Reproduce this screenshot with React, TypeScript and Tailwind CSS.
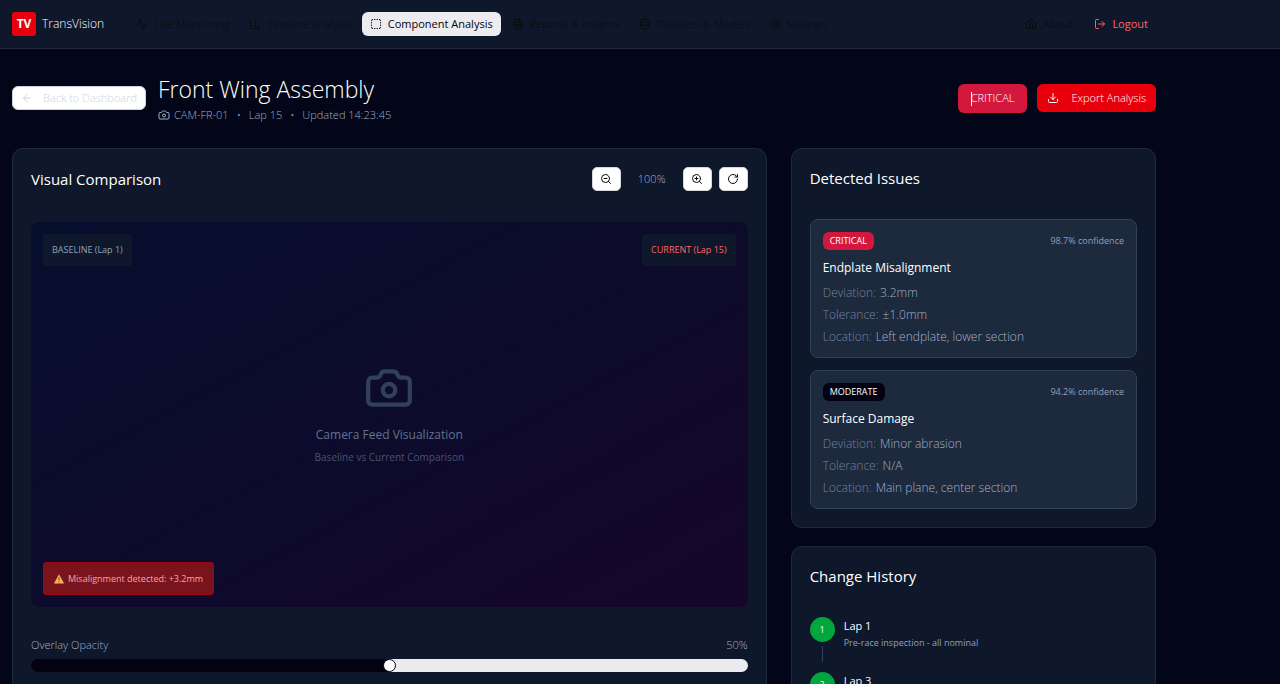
import { useState } from 'react';
import {
  Activity,
  ArrowLeft,
  Camera,
  ChartColumn,
  Database,
  Download,
  FileText,
  House,
  LogOut,
  RotateCw,
  Settings,
  SquareDashed,
  ZoomIn,
  ZoomOut,
} from 'lucide-react';

const navItems = [
  { label: 'Live Monitoring', icon: Activity },
  { label: 'Timeline Analysis', icon: ChartColumn },
  { label: 'Component Analysis', icon: SquareDashed, active: true },
  { label: 'Reports & Insights', icon: FileText },
  { label: 'Datasets & Models', icon: Database },
  { label: 'Settings', icon: Settings },
];

const issues = [
  {
    severity: 'CRITICAL',
    confidence: '98.7%',
    title: 'Endplate Misalignment',
    deviation: '3.2mm',
    tolerance: '±1.0mm',
    location: 'Left endplate, lower section',
  },
  {
    severity: 'MODERATE',
    confidence: '94.2%',
    title: 'Surface Damage',
    deviation: 'Minor abrasion',
    tolerance: 'N/A',
    location: 'Main plane, center section',
  },
];

const history = [
  { lap: 'Lap 1', note: 'Pre-race inspection - all nominal' },
  { lap: 'Lap 3' },
];

function Navbar() {
  return (
    <header className="border-b border-[#1d293d] bg-[#0f172b]">
      <div className="flex h-12 max-w-[1168px] items-center justify-between px-3">
        <div className="flex items-center gap-6">
          <div className="flex items-center gap-1.5">
            <div className="flex size-6 items-center justify-center rounded-[3px] bg-[#e7000b] text-[12px] font-bold text-white">
              TV
            </div>
            <span className="text-[12px] text-white">TransVision</span>
          </div>
          <nav className="flex items-center gap-[3px]">
            {navItems.map(({ label, icon: Icon, active }) => (
              <a
                key={label}
                href="#"
                aria-current={active ? 'page' : undefined}
                className={
                  active
                    ? 'flex h-6 items-center gap-1.5 rounded-md bg-[#ececf0] px-2 text-[11px] font-normal text-[#030213]'
                    : 'flex h-6 items-center gap-1.5 rounded-md px-2 text-[11px] text-[#0a0a0a]'
                }
              >
                <Icon className="size-3" />
                {label}
              </a>
            ))}
          </nav>
        </div>
        <div className="flex items-center gap-1.5">
          <a href="#" className="flex h-6 items-center gap-1.5 rounded-md px-2 text-[11px] text-[#0a0a0a]">
            <House className="size-3" />
            About
          </a>
          <button className="flex h-6 items-center gap-1.5 rounded-md px-2 text-[11px] font-normal text-[#ff6467]">
            <LogOut className="size-3" />
            Logout
          </button>
        </div>
      </div>
    </header>
  );
}

function PageHeader() {
  return (
    <div className="flex items-center justify-between">
      <div className="flex items-center gap-3">
        <button className="flex h-6 items-center gap-2.5 rounded-md border border-[#cad5e2] bg-white px-2 text-[11px] text-[#cad5e2]">
          <ArrowLeft className="size-3" />
          Back to Dashboard
        </button>
        <div>
          <h1 className="text-[23px] leading-8 text-white">Front Wing Assembly</h1>
          <div className="mt-0.5 flex items-center gap-2 text-[11px] leading-4 text-[#9fb0c8]">
            <span className="flex items-center gap-1">
              <Camera className="size-3" />
              CAM-FR-01
            </span>
            <span>•</span>
            <span>Lap 15</span>
            <span>•</span>
            <span>Updated 14:23:45</span>
          </div>
        </div>
      </div>
      <div className="flex items-center gap-2.5">
        <span className="relative flex h-[29px] items-center rounded-md bg-[#d4183d] px-[13px] text-[11px] text-white">
          CRITICAL
          <span className="absolute top-2 left-[13px] h-3.5 w-px bg-white" />
        </span>
        <button className="flex h-7 items-center gap-3 rounded-md bg-[#e7000b] px-2.5 text-[11px] text-white">
          <Download className="size-3" />
          Export Analysis
        </button>
      </div>
    </div>
  );
}

function VisualComparison() {
  const [opacity, setOpacity] = useState(50);
  const toolButton =
    'flex h-6 w-[29px] items-center justify-center rounded-[5px] border border-[#d5d7dc] bg-white text-[#0a0a0a]';

  return (
    <section className="col-span-2 rounded-[11px] border border-[#1d293d] bg-[#0f172b] p-[18px]">
      <div className="flex h-6 items-center justify-between">
        <h2 className="text-[15px] font-normal text-white">Visual Comparison</h2>
        <div className="flex items-center gap-[7px]">
          <button className={toolButton} aria-label="Zoom out">
            <ZoomOut className="size-3" />
          </button>
          <span className="w-12 text-center text-[11px] text-[#9fb0c8]">100%</span>
          <button className={toolButton} aria-label="Zoom in">
            <ZoomIn className="size-3" />
          </button>
          <button className={toolButton} aria-label="Reset view">
            <RotateCw className="size-3" />
          </button>
        </div>
      </div>

      {/* Camera feed */}
      <div className="relative mt-[31px] flex h-[385px] flex-col items-center justify-center rounded-lg bg-linear-to-br from-[#060e2e] via-[#0d0b2c] to-[#15062b]">
        <Camera className="size-[50px] text-[#314158]" />
        <p className="mt-2.5 text-[12px] leading-6 font-normal text-[#62748e]">Camera Feed Visualization</p>
        <p className="text-[10px] leading-5 font-normal text-[#45556c]">Baseline vs Current Comparison</p>

        <div className="absolute top-3 left-3 flex h-8 items-center rounded-[3px] bg-[#0f172b] px-[9px] text-[9px] font-normal text-[#90a1b9]">
          BASELINE (Lap 1)
        </div>
        <div className="absolute top-3 right-3 flex h-8 items-center rounded-[3px] bg-[#0f172b] px-[9px] text-[9px] font-normal text-[#ff6467]">
          CURRENT (Lap 15)
        </div>
        <div className="absolute bottom-3 left-3 flex h-[33px] items-center gap-1 rounded-[3px] border border-[#9f0712] bg-[#7a141c] px-2.5 text-[9px] font-normal text-[#ffa2a2]">
          <svg viewBox="0 0 20 20" className="size-2.5" aria-hidden="true">
            <path d="M10 1.5 19.3 18.5H.7Z" fill="#f8b55a" stroke="#f8b55a" strokeLinejoin="round" />
            <path d="M10 7v5.5M10 14.6v2" stroke="#5b2a17" strokeWidth="2" />
          </svg>
          Misalignment detected: +3.2mm
        </div>
      </div>

      {/* Overlay opacity */}
      <div className="mt-7 flex items-center justify-between text-[11px] leading-5 text-[#9fb0c8]">
        <label htmlFor="opacity">Overlay Opacity</label>
        <span>{opacity}%</span>
      </div>
      <input
        id="opacity"
        type="range"
        min={0}
        max={100}
        value={opacity}
        onChange={(e) => setOpacity(Number(e.target.value))}
        className="mt-1 block h-[13px] w-full appearance-none rounded-full [&::-webkit-slider-thumb]:size-[13px] [&::-webkit-slider-thumb]:appearance-none [&::-webkit-slider-thumb]:rounded-full [&::-webkit-slider-thumb]:border [&::-webkit-slider-thumb]:border-[#030213] [&::-webkit-slider-thumb]:bg-white"
        style={{ background: `linear-gradient(to right, #030213 ${opacity}%, #ececf0 ${opacity}%)` }}
      />
      <div className="h-24" />
    </section>
  );
}

function DetectedIssues() {
  return (
    <section className="rounded-[11px] border border-[#1d293d] bg-[#0f172b] p-[18px]">
      <h2 className="text-[15px] leading-[22px] font-normal text-white">Detected Issues</h2>
      <div className="mt-[30px] space-y-3">
        {issues.map((issue) => (
          <div key={issue.title} className="rounded-lg border border-[#314158] bg-[#1d293d] px-3 pt-3 pb-[9px]">
            <div className="flex h-[18px] items-center justify-between">
              <span
                className={
                  issue.severity === 'CRITICAL'
                    ? 'rounded-md bg-[#d4183d] px-[7px] text-[9px] leading-[18px] font-normal text-white'
                    : 'rounded-md bg-[#030213] px-[7px] text-[9px] leading-[18px] font-normal text-white'
                }
              >
                {issue.severity}
              </span>
              <span className="text-[9px] font-normal text-[#90a1b9]">{issue.confidence} confidence</span>
            </div>
            <h3 className="mt-2 text-[12px] leading-5 font-normal text-white">{issue.title}</h3>
            <dl className="mt-1 text-[12px] leading-[22px] text-[#a3b3ca]">
              <div className="flex gap-1">
                <dt className="text-[#71839d]">Deviation:</dt>
                <dd>{issue.deviation}</dd>
              </div>
              <div className="flex gap-1">
                <dt className="text-[#71839d]">Tolerance:</dt>
                <dd>{issue.tolerance}</dd>
              </div>
              <div className="flex gap-1">
                <dt className="text-[#71839d]">Location:</dt>
                <dd>{issue.location}</dd>
              </div>
            </dl>
          </div>
        ))}
      </div>
    </section>
  );
}

function ChangeHistory() {
  return (
    <section className="rounded-[11px] border border-[#1d293d] bg-[#0f172b] p-[18px]">
      <h2 className="text-[15px] leading-[22px] font-normal text-white">Change History</h2>
      <ol className="mt-[30px]">
        {history.map((entry, i) => (
          <li key={entry.lap} className="flex h-[55px] gap-[9px]">
            <div className="flex flex-col items-center">
              <div className="flex size-[25px] items-center justify-center rounded-full bg-[#00a63e] text-[9px] font-normal text-white">
                {i + 1}
              </div>
              <div className="mt-1 h-4 w-px bg-[#314158]" />
            </div>
            <div className="font-normal">
              <p className="text-[11px] leading-[18px] text-white">{entry.lap}</p>
              {entry.note && <p className="text-[9px] leading-4 text-[#90a1b9]">{entry.note}</p>}
            </div>
          </li>
        ))}
      </ol>
    </section>
  );
}

export default function App() {
  return (
    <div className="h-screen overflow-hidden bg-[#020618] font-['Open_Sans','Noto_Sans',sans-serif] font-light">
      <Navbar />
      <main className="max-w-[1168px] px-3 pt-6">
        <PageHeader />
        <div className="mt-[25px] grid grid-cols-3 gap-6">
          <VisualComparison />
          <div className="space-y-[18px]">
            <DetectedIssues />
            <ChangeHistory />
          </div>
        </div>
      </main>
    </div>
  );
}
